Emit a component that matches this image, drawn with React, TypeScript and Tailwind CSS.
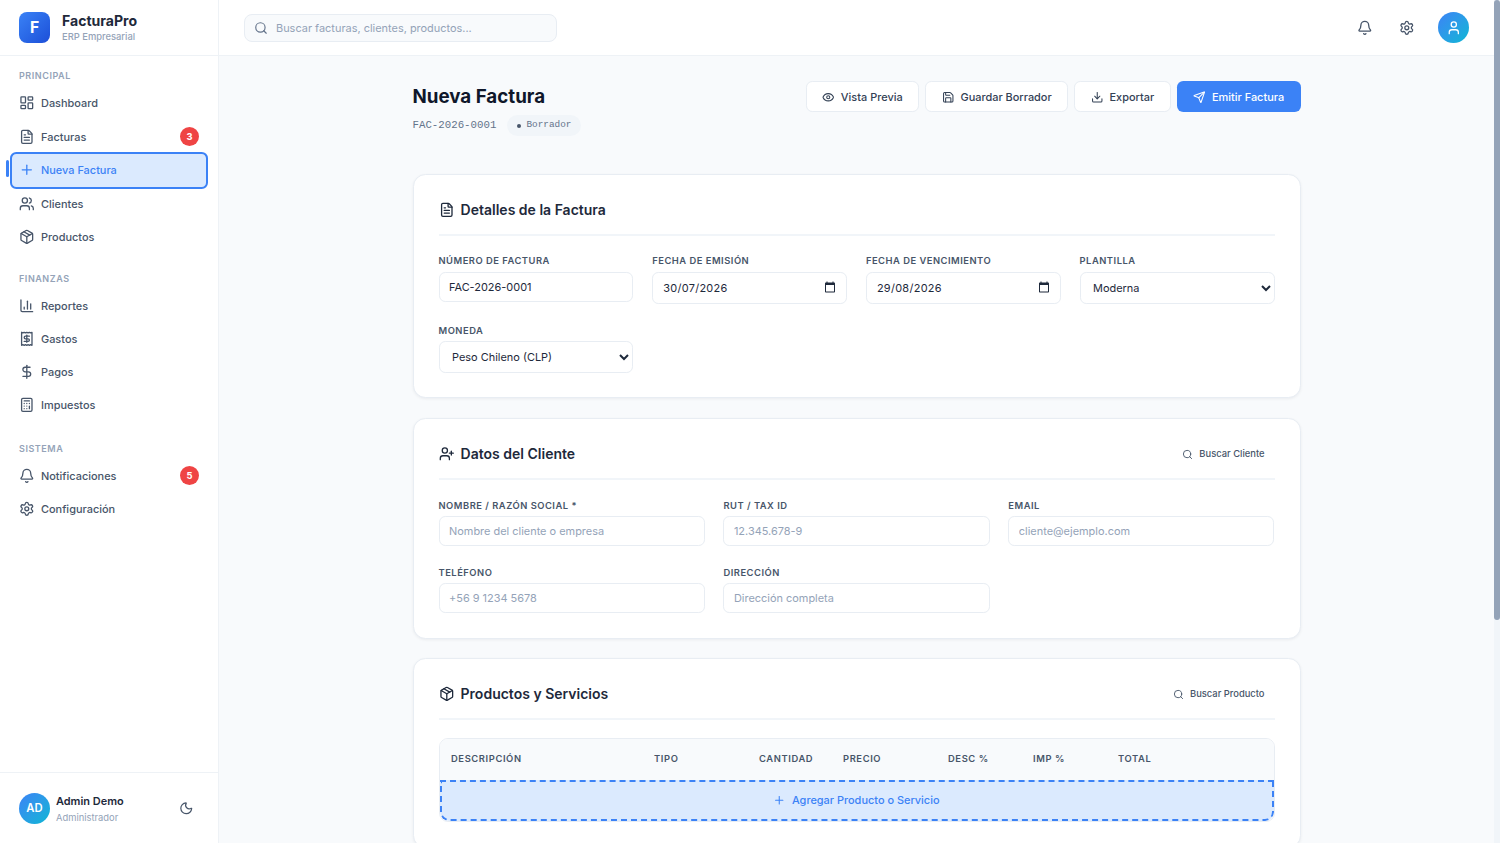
import React from 'react';
import {
  Bell,
  Calculator,
  ChartColumn,
  DollarSign,
  Download,
  Eye,
  FileText,
  LayoutDashboard,
  Moon,
  Package,
  Plus,
  Receipt,
  Save,
  Search,
  Send,
  Settings,
  User,
  UserPlus,
  Users,
} from 'lucide-react';

const label = 'block text-[9.4px] leading-[12px] font-semibold uppercase tracking-[0.5px] text-[#475569] mb-[4.5px]';
const field =
  'block w-full h-[30px] rounded-[6.25px] border border-[#e8edf3] bg-white px-[9.5px] text-[10.94px] text-[#1e293b] outline-none placeholder:text-[#94a3b8]';
const selectField =
  'block w-full h-[32px] rounded-[6.25px] border border-[#e8edf3] bg-white pl-[8.5px] text-[10.94px] text-[#1e293b] outline-none';
const dateField =
  'block w-full h-[32px] rounded-[6.25px] border border-[#e8edf3] bg-white pl-[10px] text-[10.94px] tracking-[0.3px] text-[#1e293b] outline-none';

const NavItem = ({ icon: Icon, text, badge }: { icon: React.ElementType; text: string; badge?: string }) => (
  <div className="flex h-[33.5px] items-center gap-[6.4px] px-[9px] text-[#475569]">
    <Icon size={15.6} strokeWidth={2} />
    <span className="text-[10.94px] font-medium">{text}</span>
    {badge && (
      <span className="ml-auto flex h-[19px] w-[19px] items-center justify-center rounded-full bg-[#ef4444] text-[9.4px] font-bold text-white">
        {badge}
      </span>
    )}
  </div>
);

const NavLabel = ({ text }: { text: string }) => (
  <p className="px-[9px] text-[9px] leading-[12px] font-semibold uppercase tracking-[0.55px] text-[#94a3b8]">{text}</p>
);

const Btn = ({ icon: Icon, text }: { icon: React.ElementType; text: string }) => (
  <button className="flex h-[31px] items-center gap-[6.25px] rounded-[6.25px] border border-[#e8edf3] bg-white px-[15.4px] pt-[1px] text-[10.94px] font-medium text-[#334155]">
    <Icon size={12.5} strokeWidth={2} />
    {text}
  </button>
);

const CardTitle = ({ icon: Icon, text, action }: { icon: React.ElementType; text: string; action?: string }) => (
  <div className="flex h-[35.5px] items-start justify-between border-b-2 border-[#f1f5f9]">
    <div className="flex h-[19px] items-center gap-[6.5px] text-[#1e293b]">
      <Icon size={15.6} strokeWidth={2} />
      <span className="text-[14px] font-semibold">{text}</span>
    </div>
    {action && (
      <div className="flex h-[21px] items-center gap-[6px] pr-[10px] text-[9.4px] font-medium text-[#475569]">
        <Search size={11} strokeWidth={2} />
        {action}
      </div>
    )}
  </div>
);

const DateField = ({ value }: { value: string }) => (
  <div className="relative">
    <input className={dateField} defaultValue={value} />
    {/* native date picker glyph */}
    <svg viewBox="0 0 24 24" className="absolute top-[9.5px] right-[11px] h-[12px] w-[12px] fill-[#1e293b]">
      <path d="M20 3h-1V1h-2v2H7V1H5v2H4c-1.1 0-2 .9-2 2v16c0 1.1.9 2 2 2h16c1.1 0 2-.9 2-2V5c0-1.1-.9-2-2-2zm0 18H4V8h16v13z" />
    </svg>
  </div>
);

const App = () => {
  return (
    <div className="flex h-screen overflow-hidden bg-[#f8fafc] font-['Inter',sans-serif]">
      {/* sidebar */}
      <aside className="flex w-[219px] shrink-0 flex-col border-r border-[#eef2f6] bg-white">
        <div className="flex h-[56px] shrink-0 items-center gap-[12px] border-b border-[#eef2f6] px-[19px]">
          <div className="flex h-[31px] w-[31px] items-center justify-center rounded-[8px] bg-gradient-to-br from-[#3b82f6] to-[#1d4ed8] text-[15.6px] font-bold text-white">
            F
          </div>
          <div>
            <p className="text-[14.06px] leading-[18px] font-bold text-[#1e293b]">FacturaPro</p>
            <p className="mt-[1px] text-[9.4px] leading-[12px] font-medium text-[#94a3b8]">ERP Empresarial</p>
          </div>
        </div>
        <nav className="flex-1 px-[10px] pt-[14px]">
          <NavLabel text="Principal" />
          <div className="mt-[4.5px]">
            <NavItem icon={LayoutDashboard} text="Dashboard" />
            <NavItem icon={FileText} text="Facturas" badge="3" />
            <div className="relative">
              <span className="absolute top-[8px] left-[-4px] h-[17px] w-[2.5px] rounded-[2px] bg-[#3b82f6]" />
              <div className="my-[-2px] flex h-[37.5px] items-center gap-[6.4px] rounded-[6.25px] border-2 border-[#3b82f6] bg-[#dbeafe] px-[7px] text-[#3b82f6]">
                <Plus size={15.6} strokeWidth={2} />
                <span className="text-[10.94px] font-medium">Nueva Factura</span>
              </div>
            </div>
            <NavItem icon={Users} text="Clientes" />
            <NavItem icon={Package} text="Productos" />
          </div>
          <div className="mt-[19px]">
            <NavLabel text="Finanzas" />
          </div>
          <div className="mt-[4.5px] [&>div]:h-[33px]">
            <NavItem icon={ChartColumn} text="Reportes" />
            <NavItem icon={Receipt} text="Gastos" />
            <NavItem icon={DollarSign} text="Pagos" />
            <NavItem icon={Calculator} text="Impuestos" />
          </div>
          <div className="mt-[21px]">
            <NavLabel text="Sistema" />
          </div>
          <div className="mt-[4.5px]">
            <NavItem icon={Bell} text="Notificaciones" badge="5" />
            <NavItem icon={Settings} text="Configuración" />
          </div>
        </nav>
        <div className="flex h-[71px] shrink-0 items-center gap-[6px] border-t border-[#eef2f6] px-[19px]">
          <div className="flex h-[31px] w-[31px] items-center justify-center rounded-full bg-gradient-to-br from-[#3b82f6] to-[#06b6d4] text-[11.25px] font-semibold text-white">
            AD
          </div>
          <div className="flex-1 pt-[1px]">
            <p className="text-[10.94px] leading-[15px] font-semibold text-[#1e293b]">Admin Demo</p>
            <p className="mt-[3px] text-[9.4px] leading-[12px] text-[#94a3b8]">Administrador</p>
          </div>
          <Moon size={14.5} strokeWidth={2} className="mr-[6px] text-[#475569]" />
        </div>
      </aside>

      {/* content */}
      <div className="min-w-0 flex-1 overflow-hidden">
        <header className="flex h-[56px] items-center justify-between border-b border-[#eef2f6] bg-white px-[25px]">
          <div className="relative w-[313px]">
            <Search size={14} strokeWidth={2} className="absolute top-[7px] left-[10px] text-[#64748b]" />
            <input
              placeholder="Buscar facturas, clientes, productos..."
              className="h-[28px] w-full rounded-[8px] border border-[#e8edf3] bg-[#f8fafc] pl-[31px] text-[10.94px] outline-none placeholder:text-[#94a3b8]"
            />
          </div>
          <div className="flex items-center text-[#475569]">
            <Bell size={15.6} strokeWidth={2} />
            <Settings size={15.6} strokeWidth={2} className="ml-[26.5px]" />
            <div className="ml-[23px] flex h-[31px] w-[31px] items-center justify-center rounded-full bg-gradient-to-br from-[#3b82f6] to-[#06b6d4] text-white">
              <User size={15.6} strokeWidth={2} />
            </div>
          </div>
        </header>

        <main className="mx-auto w-[938px] px-[25px] pt-[25px]">
          <div className="mb-[38px] flex items-start justify-between">
            <div>
              <h1 className="text-[18.75px] leading-[31px] font-bold text-[#0f172a]">Nueva Factura</h1>
              <div className="mt-[3px] flex items-center gap-[11px] font-['Liberation_Mono',monospace] text-[#64748b]">
                <span className="text-[10.75px]">FAC-2026-0001</span>
                <span className="flex h-[21px] items-center gap-[5px] rounded-full bg-[#f1f5f9] px-[10px] text-[9.4px]">
                  <span className="h-[4px] w-[4px] rounded-full bg-[#475569]" />
                  Borrador
                </span>
              </div>
            </div>
            <div className="flex gap-[6.25px]">
              <Btn icon={Eye} text="Vista Previa" />
              <Btn icon={Save} text="Guardar Borrador" />
              <Btn icon={Download} text="Exportar" />
              <button className="flex h-[31px] items-center gap-[6.25px] rounded-[6.25px] bg-[#3b82f6] px-[16.4px] pt-[1px] text-[10.94px] font-medium text-white">
                <Send size={12.5} strokeWidth={2} />
                Emitir Factura
              </button>
            </div>
          </div>

          <section className="rounded-[12.5px] border border-[#e8edf3] bg-white px-[25px] pt-[25px] pb-[24px] shadow-[0_1px_3px_rgba(15,23,42,0.06)]">
            <CardTitle icon={FileText} text="Detalles de la Factura" />
            <div className="mt-[19.5px] grid grid-cols-4 gap-x-[18.75px] gap-y-[21px]">
              <div>
                <label className={label}>Número de Factura</label>
                <input className={field} defaultValue="FAC-2026-0001" />
              </div>
              <div>
                <label className={label}>Fecha de Emisión</label>
                <DateField value="30/07/2026" />
              </div>
              <div>
                <label className={label}>Fecha de Vencimiento</label>
                <DateField value="29/08/2026" />
              </div>
              <div>
                <label className={label}>Plantilla</label>
                <select className={selectField}>
                  <option>Moderna</option>
                </select>
              </div>
              <div>
                <label className={label}>Moneda</label>
                <select className={selectField}>
                  <option>Peso Chileno (CLP)</option>
                </select>
              </div>
            </div>
          </section>

          <section className="mt-[20px] rounded-[12.5px] border border-[#e8edf3] bg-white p-[25px] shadow-[0_1px_3px_rgba(15,23,42,0.06)]">
            <CardTitle icon={UserPlus} text="Datos del Cliente" action="Buscar Cliente" />
            <div className="mt-[20px] grid grid-cols-3 gap-x-[18.75px] gap-y-[20.5px]">
              <div>
                <label className={label}>Nombre / Razón Social *</label>
                <input className={field} placeholder="Nombre del cliente o empresa" />
              </div>
              <div>
                <label className={label}>RUT / Tax ID</label>
                <input className={field} placeholder="12.345.678-9" />
              </div>
              <div>
                <label className={label}>Email</label>
                <input className={field} placeholder="cliente@ejemplo.com" />
              </div>
              <div>
                <label className={label}>Teléfono</label>
                <input className={field} placeholder="+56 9 1234 5678" />
              </div>
              <div>
                <label className={label}>Dirección</label>
                <input className={field} placeholder="Dirección completa" />
              </div>
            </div>
          </section>

          <section className="mt-[19px] rounded-[12.5px] border border-[#e8edf3] bg-white p-[25px] shadow-[0_1px_3px_rgba(15,23,42,0.06)]">
            <CardTitle icon={Package} text="Productos y Servicios" action="Buscar Producto" />
            <div className="mt-[18.5px] overflow-hidden rounded-[9px] border border-[#e8edf3]">
              <div className="grid h-[40.5px] grid-cols-[203px_105px_84px_105px_85px_85px_1fr] items-center bg-[#f8fafc] px-[11.5px] text-[9.4px] font-semibold tracking-[0.6px] text-[#475569]">
                <span>DESCRIPCIÓN</span>
                <span>TIPO</span>
                <span>CANTIDAD</span>
                <span>PRECIO</span>
                <span>DESC %</span>
                <span>IMP %</span>
                <span>TOTAL</span>
              </div>
              <div className="flex h-[41px] items-center justify-center gap-[6px] rounded-b-[9px] border-2 border-dashed border-[#3b82f6] bg-[#dbeafe] text-[10.94px] font-medium text-[#3b82f6]">
                <Plus size={12.5} strokeWidth={2} />
                Agregar Producto o Servicio
              </div>
            </div>
          </section>
        </main>
      </div>

      {/* page scrollbar */}
      <div className="w-[6px] shrink-0 bg-[#f1f5f9]">
        <div className="h-[620px] rounded-[3px] bg-[#94a3b8]" />
      </div>
    </div>
  );
};

export default App;
